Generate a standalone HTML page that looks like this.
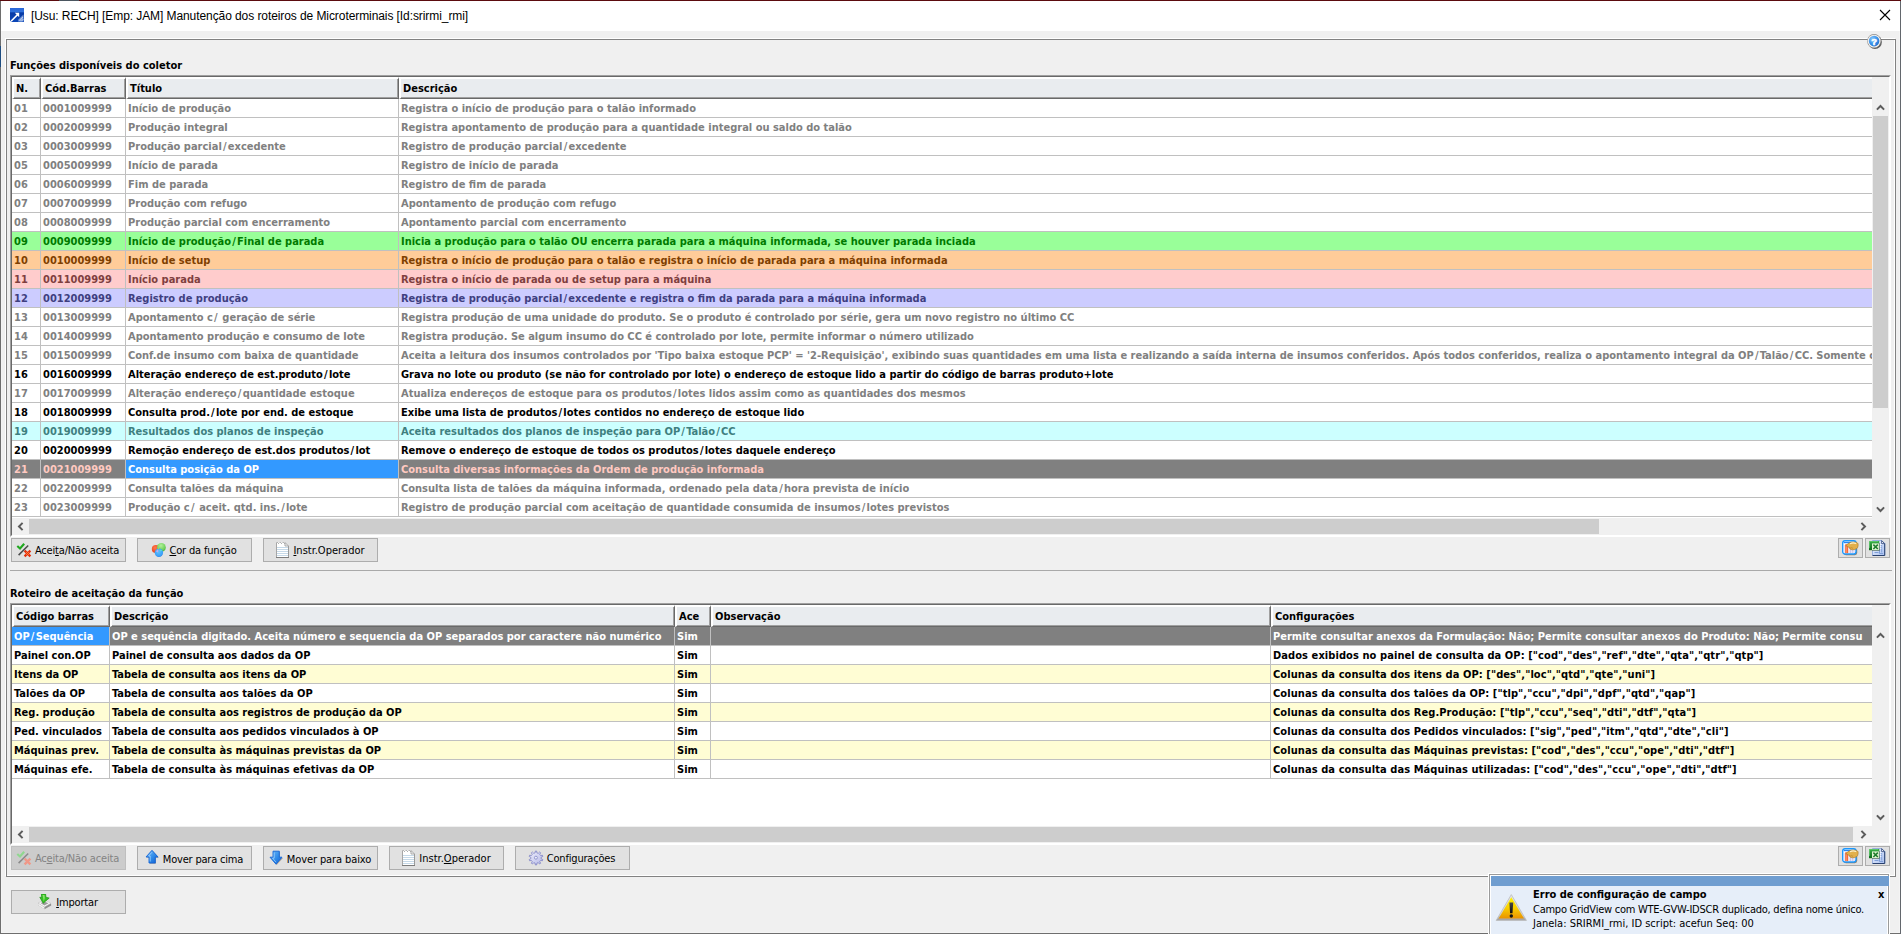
<!DOCTYPE html>
<html lang="pt-BR"><head><meta charset="utf-8"><title>Manutenção dos roteiros de Microterminais</title>
<style>
html,body{margin:0;padding:0}
body{width:1901px;height:934px;overflow:hidden;position:relative;background:#f0f0f0;color:#000;
 font:normal 11px/13px "DejaVu Sans Condensed","Liberation Sans",sans-serif;}
div,span{box-sizing:border-box}
svg{display:block}
.edgeT{position:absolute;left:0;top:0;width:1901px;height:1px;background:#5b0b0e;z-index:5}
.edgeT:after{content:"";position:absolute;left:59px;top:0;width:20px;height:1px;background:#4b5660}
.edgeL{position:absolute;left:0;top:1px;width:2px;height:933px;border-left:1px solid #6e6e6e;background:#f4f4f4;
 }
.edgeL:after{content:"";position:absolute;left:-1px;top:45px;width:1px;height:21px;background:#1d4c80}
.edgeR{position:absolute;left:1899px;top:1px;width:2px;height:933px;border-right:1px solid #63676d;background:#f4f4f4}
.edgeB{position:absolute;left:1px;top:932px;width:1899px;height:2px;background:#f4f4f4;border-bottom:1px solid #6e6e6e}
.titlebar{position:absolute;left:1px;top:1px;width:1899px;height:30px;background:#fff}
.appicon{position:absolute;left:9px;top:7px;width:14px;height:14px}
.ttl{position:absolute;left:30px;top:7px;font:normal 12px/16px "Liberation Sans",sans-serif;letter-spacing:-0.08px;white-space:nowrap}
.xclose{position:absolute;left:1878px;top:8px;width:12px;height:12px}
.gbw{position:absolute;left:5px;top:38px;width:1890px;height:838px;border:1px solid #fff}
.gbd{position:absolute;left:6px;top:39px;width:1890px;height:838px;border:1px solid #828282}
.help{position:absolute;left:1866px;top:32px;width:18px;height:18px}
.lbl{position:absolute;font-weight:bold;white-space:nowrap;line-height:13px}
.grid{position:absolute;border:1px solid;border-color:#a0a0a0 #fff #fff #a0a0a0}
.gin{position:relative;border:1px solid;border-color:#696969 #fff #fff #696969;background:#fff;overflow:hidden;box-sizing:content-box;font-weight:bold}
.hdr{position:absolute;left:0;top:0;width:1860px;height:22px;overflow:hidden;background:#e9ecef}
.hc{position:absolute;top:0;height:22px;background:#e9ecef;border-top:2px solid #fff;border-left:2px solid #fff;border-right:1px solid #696969;border-bottom:1px solid #696969;box-shadow:inset -1px -1px 0 #a0a0a0;white-space:nowrap;overflow:hidden}
.hc span{position:absolute;left:2px;top:3px;line-height:13px}
.r{position:absolute;left:0;width:1860px;height:19px;border-bottom:1px solid #c0c0c0;overflow:hidden;background:#fff}
.c{position:absolute;top:0;height:18px;line-height:20px;padding-left:2px;border-right:1px solid #c0c0c0;white-space:nowrap;overflow:hidden}
.dis{color:#808080}.blk{color:#000}
.grn{background:#99ff99;color:#007a00}
.org{background:#ffcc99;color:#7f3f00}
.pnk{background:#ffcccc;color:#7f3f3f}
.lav{background:#ccccff;color:#3f3f7f}
.cyn{background:#ccffff;color:#3f7f7f}
.sel{background:#808080;color:#ffc9c1}
.g2.sel{color:#fff}
.y{background:#fffdd4}
.c.cur{background:#3399ff;color:#fff}
.vstrip{position:absolute;right:0;top:0;width:17px;height:100%;background:#f0f0f0}
.vsb{position:absolute;right:0;width:17px;background:#f0f0f0}
.hsb{position:absolute;left:0;bottom:0;width:1860px;height:17px;background:#f0f0f0}
.ab{position:absolute;left:0;top:0;width:17px;height:17px}
.vth{position:absolute;left:1px;width:15px;background:#cdcdcd}
.hth{position:absolute;top:1px;height:15px;background:#cdcdcd}
.corner{position:absolute;right:0;bottom:0;width:17px;height:17px;background:#f0f0f0}
.btn{position:absolute;width:115px;height:24px;padding-right:2px;border:1px solid #adadad;background:#e1e1e1;display:flex;align-items:center;justify-content:center;white-space:nowrap;letter-spacing:-0.17px}
.btn .bi{width:16px;height:16px;margin-right:3px;flex:none}
.btn .bt{line-height:13px}
.btn u{text-decoration:underline;text-underline-offset:1px}
.btn.disabled{background:#cccccc;border-color:#bfbfbf;color:#838383}
.sbtn{position:absolute;width:25px;height:20px;border:1px solid #adadad;background:#e1e1e1;padding:1px 0 0 3px}
.sep{position:absolute;left:10px;top:570px;width:1882px;height:1px;background:#a9a9a9}
.pop{position:absolute;left:1488px;top:873px;width:402px;height:61px;border:1px solid #fff;border-bottom:0;z-index:6}
.popin{position:absolute;left:0;top:0;width:400px;height:60px;border:1px solid #9a9a9a;border-bottom:0;background:#e6eef9;box-shadow:inset 1px 1px 0 #fff,inset -1px 0 0 #fff}
.pophd{position:absolute;left:1px;top:1px;width:398px;height:10px;background:#6f9dd0}
.warn{position:absolute;left:5px;top:17px;width:33px;height:30px}
.pt{position:absolute;left:43px;top:13px;font-weight:bold;white-space:nowrap;line-height:13px}
.pl{position:absolute;left:43px;white-space:nowrap;letter-spacing:-0.25px;line-height:13px}
.px{position:absolute;left:388px;top:13px;font-weight:bold;line-height:13px}
.btn.lo .bt{position:relative;top:1px}
.c i{font-style:normal;margin:0 1.2px}
.c.js{letter-spacing:.08px}

</style></head>
<body>
<div class="edgeL"></div><div class="edgeR"></div><div class="edgeT"></div><div class="edgeB"></div>
<div class="titlebar"><span class="appicon"><svg width="14" height="14" viewBox="0 0 14 14"><defs><linearGradient id="ag1" x1="0" y1="0" x2="0" y2="1"><stop offset="0" stop-color="#2a66d8"/><stop offset="0.28" stop-color="#2f72dc"/><stop offset="0.34" stop-color="#083aa6"/><stop offset="1" stop-color="#0a46b8"/></linearGradient></defs><path d="M0 0h14v14h-12.5l-1.500-1.500z" fill="url(#ag1)"/><path d="M1 13.200L7.600 6.600" stroke="#fff" stroke-width="1.500"/><path d="M4.800 4.800L9.200 4.800L9.200 9.200Z" fill="#fff"/><path d="M8.500 11.500L13.500 6.500V13.600H8z" fill="#a9c0ea" opacity=".7"/><path d="M9.500 13l3.500-4M11 13.500l2.500-2.500" stroke="#e8effb" stroke-width=".8" opacity=".8"/></svg></span><span class="ttl">[Usu: RECH] [Emp: JAM] Manutenção dos roteiros de Microterminais [Id:srirmi_rmi]</span><span class="xclose"><svg width="12" height="12" viewBox="0 0 12 12"><path d="M1 1L11 11M11 1L1 11" stroke="#000" stroke-width="1.100" fill="none"/></svg></span></div>
<div class="gbw"></div><div class="gbd"></div>
<div class="help"><svg width="18" height="18" viewBox="0 0 18 18"><defs><radialGradient id="hg3" cx="0.36" cy="0.30" r="0.80"><stop offset="0" stop-color="#8ac8fb"/><stop offset="0.55" stop-color="#3a92ea"/><stop offset="1" stop-color="#1a6ccc"/></radialGradient></defs><circle cx="9" cy="10.100" r="6.900" fill="#3c3c3c" opacity=".8"/><circle cx="8.100" cy="8.900" r="6.900" fill="#8c8c8c"/><circle cx="8.100" cy="9.100" r="6.400" fill="#f6f2ee"/><circle cx="8.100" cy="9.100" r="5.300" fill="url(#hg3)"/><text x="8.100" y="12.500" text-anchor="middle" font-family="Liberation Sans,sans-serif" font-weight="bold" font-size="9.500" fill="#fff" stroke="#fff" stroke-width=".55">?</text></svg></div>
<div class="lbl" style="left:10px;top:59px">Funções disponíveis do coletor</div>
<div class="grid" style="left:10px;top:75px"><div class="gin" style="width:1877px;height:458px"><div class="vstrip"></div>
<div class="hdr">
<div class="hc" style="left:0px;width:29px"><span>N.</span></div>
<div class="hc" style="left:29px;width:85px"><span>Cód.Barras</span></div>
<div class="hc" style="left:114px;width:273px"><span>Título</span></div>
<div class="hc" style="left:387px;width:2000px"><span>Descrição</span></div>
</div>
<div class="r dis" style="top:22px">
<div class="c" style="left:0px;width:29px">01</div>
<div class="c" style="left:29px;width:85px">0001009999</div>
<div class="c" style="left:114px;width:273px">Início de produção</div>
<div class="c" style="left:387px;width:2000px">Registra o início de produção para o talão informado</div>
</div>
<div class="r dis" style="top:41px">
<div class="c" style="left:0px;width:29px">02</div>
<div class="c" style="left:29px;width:85px">0002009999</div>
<div class="c" style="left:114px;width:273px">Produção integral</div>
<div class="c" style="left:387px;width:2000px">Registra apontamento de produção para a quantidade integral ou saldo do talão</div>
</div>
<div class="r dis" style="top:60px">
<div class="c" style="left:0px;width:29px">03</div>
<div class="c" style="left:29px;width:85px">0003009999</div>
<div class="c" style="left:114px;width:273px">Produção parcial<i>/</i>excedente</div>
<div class="c" style="left:387px;width:2000px">Registro de produção parcial<i>/</i>excedente</div>
</div>
<div class="r dis" style="top:79px">
<div class="c" style="left:0px;width:29px">05</div>
<div class="c" style="left:29px;width:85px">0005009999</div>
<div class="c" style="left:114px;width:273px">Início de parada</div>
<div class="c" style="left:387px;width:2000px">Registro de início de parada</div>
</div>
<div class="r dis" style="top:98px">
<div class="c" style="left:0px;width:29px">06</div>
<div class="c" style="left:29px;width:85px">0006009999</div>
<div class="c" style="left:114px;width:273px">Fim de parada</div>
<div class="c" style="left:387px;width:2000px">Registro de fim de parada</div>
</div>
<div class="r dis" style="top:117px">
<div class="c" style="left:0px;width:29px">07</div>
<div class="c" style="left:29px;width:85px">0007009999</div>
<div class="c" style="left:114px;width:273px">Produção com refugo</div>
<div class="c" style="left:387px;width:2000px">Apontamento de produção com refugo</div>
</div>
<div class="r dis" style="top:136px">
<div class="c" style="left:0px;width:29px">08</div>
<div class="c" style="left:29px;width:85px">0008009999</div>
<div class="c" style="left:114px;width:273px">Produção parcial com encerramento</div>
<div class="c" style="left:387px;width:2000px">Apontamento parcial com encerramento</div>
</div>
<div class="r grn" style="top:155px">
<div class="c" style="left:0px;width:29px">09</div>
<div class="c" style="left:29px;width:85px">0009009999</div>
<div class="c" style="left:114px;width:273px">Início de produção<i>/</i>Final de parada</div>
<div class="c" style="left:387px;width:2000px">Inicia a produção para o talão OU encerra parada para a máquina informada, se houver parada inciada</div>
</div>
<div class="r org" style="top:174px">
<div class="c" style="left:0px;width:29px">10</div>
<div class="c" style="left:29px;width:85px">0010009999</div>
<div class="c" style="left:114px;width:273px">Início de setup</div>
<div class="c" style="left:387px;width:2000px">Registra o início de produção para o talão e registra o início de parada para a máquina informada</div>
</div>
<div class="r pnk" style="top:193px">
<div class="c" style="left:0px;width:29px">11</div>
<div class="c" style="left:29px;width:85px">0011009999</div>
<div class="c" style="left:114px;width:273px">Início parada</div>
<div class="c" style="left:387px;width:2000px">Registra o início de parada ou de setup para a máquina</div>
</div>
<div class="r lav" style="top:212px">
<div class="c" style="left:0px;width:29px">12</div>
<div class="c" style="left:29px;width:85px">0012009999</div>
<div class="c" style="left:114px;width:273px">Registro de produção</div>
<div class="c" style="left:387px;width:2000px">Registra de produção parcial<i>/</i>excedente e registra o fim da parada para a máquina informada</div>
</div>
<div class="r dis" style="top:231px">
<div class="c" style="left:0px;width:29px">13</div>
<div class="c" style="left:29px;width:85px">0013009999</div>
<div class="c" style="left:114px;width:273px">Apontamento c<i>/</i> geração de série</div>
<div class="c" style="left:387px;width:2000px">Registra produção de uma unidade do produto. Se o produto é controlado por série, gera um novo registro no último CC</div>
</div>
<div class="r dis" style="top:250px">
<div class="c" style="left:0px;width:29px">14</div>
<div class="c" style="left:29px;width:85px">0014009999</div>
<div class="c" style="left:114px;width:273px">Apontamento produção e consumo de lote</div>
<div class="c" style="left:387px;width:2000px">Registra produção. Se algum insumo do CC é controlado por lote, permite informar o número utilizado</div>
</div>
<div class="r dis" style="top:269px">
<div class="c" style="left:0px;width:29px">15</div>
<div class="c" style="left:29px;width:85px">0015009999</div>
<div class="c" style="left:114px;width:273px">Conf.de insumo com baixa de quantidade</div>
<div class="c" style="left:387px;width:2000px">Aceita a leitura dos insumos controlados por 'Tipo baixa estoque PCP' = '2-Requisição', exibindo suas quantidades em uma lista e realizando a saída interna de insumos conferidos. Após todos conferidos, realiza o apontamento integral da OP<i>/</i>Talão<i>/</i>CC. Somente com todos os insumos conferidos</div>
</div>
<div class="r blk" style="top:288px">
<div class="c" style="left:0px;width:29px">16</div>
<div class="c" style="left:29px;width:85px">0016009999</div>
<div class="c" style="left:114px;width:273px">Alteração endereço de est.produto<i>/</i>lote</div>
<div class="c" style="left:387px;width:2000px">Grava no lote ou produto (se não for controlado por lote) o endereço de estoque lido a partir do código de barras produto+lote</div>
</div>
<div class="r dis" style="top:307px">
<div class="c" style="left:0px;width:29px">17</div>
<div class="c" style="left:29px;width:85px">0017009999</div>
<div class="c" style="left:114px;width:273px">Alteração endereço<i>/</i>quantidade estoque</div>
<div class="c" style="left:387px;width:2000px">Atualiza endereços de estoque para os produtos<i>/</i>lotes lidos assim como as quantidades dos mesmos</div>
</div>
<div class="r blk" style="top:326px">
<div class="c" style="left:0px;width:29px">18</div>
<div class="c" style="left:29px;width:85px">0018009999</div>
<div class="c" style="left:114px;width:273px">Consulta prod.<i>/</i>lote por end. de estoque</div>
<div class="c" style="left:387px;width:2000px">Exibe uma lista de produtos<i>/</i>lotes contidos no endereço de estoque lido</div>
</div>
<div class="r cyn" style="top:345px">
<div class="c" style="left:0px;width:29px">19</div>
<div class="c" style="left:29px;width:85px">0019009999</div>
<div class="c" style="left:114px;width:273px">Resultados dos planos de inspeção</div>
<div class="c" style="left:387px;width:2000px">Aceita resultados dos planos de inspeção para OP<i>/</i>Talão<i>/</i>CC</div>
</div>
<div class="r blk" style="top:364px">
<div class="c" style="left:0px;width:29px">20</div>
<div class="c" style="left:29px;width:85px">0020009999</div>
<div class="c" style="left:114px;width:273px">Remoção endereço de est.dos produtos<i>/</i>lot</div>
<div class="c" style="left:387px;width:2000px">Remove o endereço de estoque de todos os produtos<i>/</i>lotes daquele endereço</div>
</div>
<div class="r sel" style="top:383px">
<div class="c" style="left:0px;width:29px">21</div>
<div class="c" style="left:29px;width:85px">0021009999</div>
<div class="c cur" style="left:114px;width:273px">Consulta posição da OP</div>
<div class="c" style="left:387px;width:2000px">Consulta diversas informações da Ordem de produção informada</div>
</div>
<div class="r dis" style="top:402px">
<div class="c" style="left:0px;width:29px">22</div>
<div class="c" style="left:29px;width:85px">0022009999</div>
<div class="c" style="left:114px;width:273px">Consulta talões da máquina</div>
<div class="c" style="left:387px;width:2000px">Consulta lista de talões da máquina informada, ordenado pela data<i>/</i>hora prevista de início</div>
</div>
<div class="r dis" style="top:421px">
<div class="c" style="left:0px;width:29px">23</div>
<div class="c" style="left:29px;width:85px">0023009999</div>
<div class="c" style="left:114px;width:273px">Produção c<i>/</i> aceit. qtd. ins.<i>/</i>lote</div>
<div class="c" style="left:387px;width:2000px">Registro de produção parcial com aceitação de quantidade consumida de insumos<i>/</i>lotes previstos</div>
</div>
<div class="vsb" style="top:22px;height:419px"><div class="ab"><svg width="17" height="17" viewBox="0 0 17 17"><path d="M4.900 10.600L8.500 7L12.100 10.600" stroke="#5c5c5c" stroke-width="2" fill="none"/></svg></div><div class="vth" style="top:17px;height:292px"></div><div class="ab" style="top:auto;bottom:0"><svg width="17" height="17" viewBox="0 0 17 17"><path d="M4.900 6.400L8.500 10L12.100 6.400" stroke="#5c5c5c" stroke-width="2" fill="none"/></svg></div></div>
<div class="hsb"><div class="ab"><svg width="17" height="17" viewBox="0 0 17 17"><path d="M10.600 4.900L7 8.500L10.600 12.100" stroke="#5c5c5c" stroke-width="2" fill="none"/></svg></div><div class="hth" style="left:17px;width:1570px"></div><div class="ab" style="left:auto;right:0"><svg width="17" height="17" viewBox="0 0 17 17"><path d="M6.400 4.900L10 8.500L6.400 12.100" stroke="#5c5c5c" stroke-width="2" fill="none"/></svg></div></div>
<div class="corner"></div>
</div></div>
<div class="btn " style="left:11px;top:538px"><span class="bi"><svg width="16" height="16" viewBox="0 0 16 16"><path d="M1.300 4L4 6.500L8.200 1.700" stroke="#1fa81f" stroke-width="2.100" fill="none"/><path d="M2.600 13.100L12.200 3.500" stroke="#4c4c4c" stroke-width="1.500"/><path d="M8.600 8.600L14.400 14.400M14.400 8.600L8.600 14.400" stroke="#e2300c" stroke-width="2.300"/><path d="M10 10L13 13M13 10L10 13" stroke="#ff7838" stroke-width="1"/></svg></span><span class="bt" style="letter-spacing:-0.17px">Acei<u>t</u>a/Não aceita</span></div>
<div class="btn " style="left:137px;top:538px"><span class="bi"><svg width="16" height="16" viewBox="0 0 16 16"><defs><radialGradient id="cr9" cx=".4" cy=".35" r=".7"><stop offset="0" stop-color="#ff7a50"/><stop offset="1" stop-color="#e63a14"/></radialGradient><radialGradient id="cg9" cx=".45" cy=".3" r=".75"><stop offset="0" stop-color="#b2f09a"/><stop offset=".7" stop-color="#6ccf58"/><stop offset="1" stop-color="#3aa62c"/></radialGradient><radialGradient id="cb9" cx=".45" cy=".4" r=".7"><stop offset="0" stop-color="#5cc0ff"/><stop offset=".7" stop-color="#3aa0f8"/><stop offset="1" stop-color="#1668d8"/></radialGradient></defs><g transform="translate(.8 0)"><circle cx="5.100" cy="7" r="4.100" fill="url(#cr9)"/><circle cx="10.600" cy="5.400" r="4.400" fill="url(#cg9)"/><circle cx="8.100" cy="10.800" r="4.200" fill="url(#cb9)"/><path d="M6.300 7.500l1.500 1.200-1.200 1.800-1.300-.8z" fill="#cfaeea" opacity=".9"/><path d="M9 7.600c1 .2 2 .6 2.700 1.200-1 .6-2 .6-3 .2z" fill="#5fe0d8" opacity=".85"/><path d="M7.300 4.500l.7 2.600-.8.400z" fill="#f2c21c"/></g></svg></span><span class="bt" style="letter-spacing:-0.17px"><u>C</u>or da função</span></div>
<div class="btn " style="left:263px;top:538px"><span class="bi"><svg width="16" height="16" viewBox="0 0 16 16"><path d="M2.500 .5h8.500l3.500 3.500v11.500h-12z" fill="#fff"/><path d="M3 5.500h11M3 7.500h11M3 9.500h11M3 11.500h11M3 13.500h11" stroke="#c6d9e8" stroke-width="1"/><path d="M2.500 .5v15" stroke="#a6a6a6"/><path d="M14.500 4v11.500" stroke="#9a9a9a"/><path d="M2 15.500h13" stroke="#7c7c7c"/><path d="M2.500 .5h8.500" stroke="#b4b4b4" stroke-dasharray="1.500 1.500"/><path d="M4 1.500h1M7 1.500h1M10 1.500h1" stroke="#b0b0b0"/><path d="M11 .5v3.500h3.500z" fill="#f4f4f4" stroke="#a2a2a2" stroke-width=".9"/></svg></span><span class="bt" style="letter-spacing:0.00px"><u>I</u>nstr.Operador</span></div>
<div class="sbtn" style="left:1838px;top:538px"><svg width="17" height="17" viewBox="0 0 17 17"><rect x="1.600" y="1.600" width="13.600" height="13.600" rx="2.400" fill="#7a5a38" opacity=".75"/><rect x=".700" y=".700" width="13.300" height="13.300" rx="2.200" fill="#fff" stroke="#1a98ff" stroke-width="1.400"/><rect x="1.800" y="1.900" width="11" height="1.300" fill="#2c86f0"/><rect x="3.200" y="4.300" width="3" height="8.800" fill="#f4602c"/><path d="M6.500 6h6.500M1.800 6h1.200M6.500 8h6.500M1.800 8h1.200M6.500 10h6.500M1.800 10h1.200M6.500 12h6.500M1.800 12h1.200M8.500 4.500v8.500M10.700 4.500v8.500" stroke="#c2bcea" stroke-width=".8"/><path d="M4.200 6h1M4.200 8h1M4.200 10h1M4.200 12h1" stroke="#ffd8c0" stroke-width=".9"/><path d="M3.800 5.700C5 4.600 6.200 3.400 7.400 2.800 8.600 2.100 10 1.900 11.500 2c1.500 0 3 .3 4 1 .7.600.7 1.600.6 2.600-.1 1.200-.4 2.200-1.300 2.900-1.200.9-2.800 1.300-4.300 1.300-1.200 0-2.300-.4-2.900-1.300-.4-.5-.5-1.100-.9-1.500-.5-.5-1.800-.5-2.900-1.300z" fill="#e2b04c" stroke="#a87620" stroke-width=".6"/><path d="M8 3.700c1.800-1 4.300-1 6.200-.2" stroke="#fff4d0" stroke-width="1.300" fill="none" opacity=".95"/><path d="M7.300 7.200l1 .9.900-.6.900.8 1-.5" stroke="#b07c22" stroke-width=".6" fill="none"/></svg></div><div class="sbtn" style="left:1865px;top:538px"><svg width="17" height="17" viewBox="0 0 17 17"><defs><linearGradient id="xd12" x1="0" y1="0" x2="1" y2="1"><stop offset="0" stop-color="#f6f9ff"/><stop offset="1" stop-color="#a6bef0"/></linearGradient><linearGradient id="xg12" x1="0" y1="0" x2="0" y2="1"><stop offset="0" stop-color="#3cb44a"/><stop offset="1" stop-color="#0c681a"/></linearGradient></defs><path d="M3.500 .500h9.300l3 3v12h-12.300z" fill="url(#xd12)" stroke="#90a8dc" stroke-width=".9"/><path d="M15.700 3.600v11.900H3.600" stroke="#28406e" stroke-width="1" fill="none"/><path d="M12.600 .700l3 2.900h-3z" fill="#fff" stroke="#2c447a" stroke-width=".8"/><path d="M5.500 12.500h4M10.500 9.500v4h3.500M12.700 5v7.500" stroke="#7f9fd8" stroke-width="1" fill="none"/><path d="M11.300 4.500h1M11.300 6.500h1M11.300 8.500h1" stroke="#fff" stroke-width="1"/><rect x="0" y="1" width="10.300" height="9.200" fill="url(#xg12)"/><path d="M0 1h9v.8H.800V8H0z" fill="#78d684" opacity=".7"/><rect x="3" y="3.400" width="7" height="6.800" fill="#dff4d2"/><path d="M10.400 3v7.500H3" stroke="#56665a" stroke-width=".8" fill="none" opacity=".75"/><path d="M4.400 4.600L8.800 9M8.800 4.600L4.400 9" stroke="#1f7c2c" stroke-width="1.500"/></svg></div>
<div class="sep"></div>
<div class="lbl" style="left:10px;top:587px">Roteiro de aceitação da função</div>
<div class="grid" style="left:10px;top:603px"><div class="gin" style="width:1877px;height:238px"><div class="vstrip"></div>
<div class="hdr">
<div class="hc" style="left:0px;width:98px"><span>Código barras</span></div>
<div class="hc" style="left:98px;width:565px"><span>Descrição</span></div>
<div class="hc" style="left:663px;width:36px"><span>Ace</span></div>
<div class="hc" style="left:699px;width:560px"><span>Observação</span></div>
<div class="hc" style="left:1259px;width:2000px"><span>Configurações</span></div>
</div>
<div class="r g2 sel" style="top:22px">
<div class="c cur" style="left:0px;width:98px">OP<i>/</i>Sequência</div>
<div class="c" style="left:98px;width:565px">OP e sequência digitado. Aceita número e sequencia da OP separados por caractere não numérico</div>
<div class="c" style="left:663px;width:36px">Sim</div>
<div class="c" style="left:699px;width:560px"></div>
<div class="c" style="left:1259px;width:2000px">Permite consultar anexos da Formulação: Não; Permite consultar anexos do Produto: Não; Permite consu</div>
</div>
<div class="r g2 w" style="top:41px">
<div class="c" style="left:0px;width:98px">Painel con.OP</div>
<div class="c" style="left:98px;width:565px">Painel de consulta aos dados da OP</div>
<div class="c" style="left:663px;width:36px">Sim</div>
<div class="c" style="left:699px;width:560px"></div>
<div class="c js" style="left:1259px;width:2000px">Dados exibidos no painel de consulta da OP: ["cod","des","ref","dte","qta","qtr","qtp"]</div>
</div>
<div class="r g2 y" style="top:60px">
<div class="c" style="left:0px;width:98px">Itens da OP</div>
<div class="c" style="left:98px;width:565px">Tabela de consulta aos itens da OP</div>
<div class="c" style="left:663px;width:36px">Sim</div>
<div class="c" style="left:699px;width:560px"></div>
<div class="c js" style="left:1259px;width:2000px">Colunas da consulta dos itens da OP: ["des","loc","qtd","qte","uni"]</div>
</div>
<div class="r g2 w" style="top:79px">
<div class="c" style="left:0px;width:98px">Talões da OP</div>
<div class="c" style="left:98px;width:565px">Tabela de consulta aos talões da OP</div>
<div class="c" style="left:663px;width:36px">Sim</div>
<div class="c" style="left:699px;width:560px"></div>
<div class="c js" style="left:1259px;width:2000px">Colunas da consulta dos talões da OP: ["tlp","ccu","dpi","dpf","qtd","qap"]</div>
</div>
<div class="r g2 y" style="top:98px">
<div class="c" style="left:0px;width:98px">Reg. produção</div>
<div class="c" style="left:98px;width:565px">Tabela de consulta aos registros de produção da OP</div>
<div class="c" style="left:663px;width:36px">Sim</div>
<div class="c" style="left:699px;width:560px"></div>
<div class="c js" style="left:1259px;width:2000px">Colunas da consulta dos Reg.Produção: ["tlp","ccu","seq","dti","dtf","qta"]</div>
</div>
<div class="r g2 w" style="top:117px">
<div class="c" style="left:0px;width:98px">Ped. vinculados</div>
<div class="c" style="left:98px;width:565px">Tabela de consulta aos pedidos vinculados à OP</div>
<div class="c" style="left:663px;width:36px">Sim</div>
<div class="c" style="left:699px;width:560px"></div>
<div class="c js" style="left:1259px;width:2000px">Colunas da consulta dos Pedidos vinculados: ["sig","ped","itm","qtd","dte","cli"]</div>
</div>
<div class="r g2 y" style="top:136px">
<div class="c" style="left:0px;width:98px">Máquinas prev.</div>
<div class="c" style="left:98px;width:565px">Tabela de consulta às máquinas previstas da OP</div>
<div class="c" style="left:663px;width:36px">Sim</div>
<div class="c" style="left:699px;width:560px"></div>
<div class="c js" style="left:1259px;width:2000px">Colunas da consulta das Máquinas previstas: ["cod","des","ccu","ope","dti","dtf"]</div>
</div>
<div class="r g2 w" style="top:155px">
<div class="c" style="left:0px;width:98px">Máquinas efe.</div>
<div class="c" style="left:98px;width:565px">Tabela de consulta às máquinas efetivas da OP</div>
<div class="c" style="left:663px;width:36px">Sim</div>
<div class="c" style="left:699px;width:560px"></div>
<div class="c js" style="left:1259px;width:2000px">Colunas da consulta das Máquinas utilizadas: ["cod","des","ccu","ope","dti","dtf"]</div>
</div>
<div class="vsb" style="top:22px;height:199px"><div class="ab"><svg width="17" height="17" viewBox="0 0 17 17"><path d="M4.900 10.600L8.500 7L12.100 10.600" stroke="#5c5c5c" stroke-width="2" fill="none"/></svg></div><div class="ab" style="top:auto;bottom:0"><svg width="17" height="17" viewBox="0 0 17 17"><path d="M4.900 6.400L8.500 10L12.100 6.400" stroke="#5c5c5c" stroke-width="2" fill="none"/></svg></div></div>
<div class="hsb"><div class="ab"><svg width="17" height="17" viewBox="0 0 17 17"><path d="M10.600 4.900L7 8.500L10.600 12.100" stroke="#5c5c5c" stroke-width="2" fill="none"/></svg></div><div class="hth" style="left:17px;width:1824px"></div><div class="ab" style="left:auto;right:0"><svg width="17" height="17" viewBox="0 0 17 17"><path d="M6.400 4.900L10 8.500L6.400 12.100" stroke="#5c5c5c" stroke-width="2" fill="none"/></svg></div></div>
<div class="corner"></div>
</div></div>
<div class="btn disabled" style="left:11px;top:846px"><span class="bi"><svg width="16" height="16" viewBox="0 0 16 16"><path d="M1.300 4L4 6.500L8.200 1.700" stroke="#8fd88f" stroke-width="2.100" fill="none"/><path d="M2.600 13.100L12.200 3.500" stroke="#8a8a8a" stroke-width="1.500"/><path d="M8.600 8.600L14.400 14.400M14.400 8.600L8.600 14.400" stroke="#f09888" stroke-width="2.300"/></svg></span><span class="bt" style="letter-spacing:-0.17px">Ac<u>e</u>ita/Não aceita</span></div>
<div class="btn lo" style="left:137px;top:846px"><span class="bi"><svg width="16" height="16" viewBox="0 0 16 16"><defs><linearGradient id="aug18" x1="0" y1="0" x2="1" y2="1"><stop offset="0" stop-color="#7cc2fa"/><stop offset=".55" stop-color="#2f8ae8"/><stop offset="1" stop-color="#0f5cd0"/></linearGradient></defs><path d="M8.600 .9L15 7.700H12V13.800H6V7.700H3Z" fill="#6a5a48" opacity=".45"/><path d="M8 .3L14 7H11.300V13H5V7H2Z" fill="url(#aug18)" stroke="#1464d6" stroke-width=".9" stroke-linejoin="round"/><path d="M8 2.200L4.600 6H6.200V11.500" stroke="#a8d8ff" stroke-width=".9" fill="none" opacity=".8"/></svg></span><span class="bt" style="letter-spacing:-0.20px">Mover para cima</span></div>
<div class="btn lo" style="left:263px;top:846px"><span class="bi"><svg width="16" height="16" viewBox="0 0 16 16"><defs><linearGradient id="adg19" x1="0" y1="0" x2="1" y2="1"><stop offset="0" stop-color="#6ab8f8"/><stop offset=".55" stop-color="#2f8ae8"/><stop offset="1" stop-color="#0f5cd0"/></linearGradient></defs><path d="M8.700 14.900L15 8H12V1.800H6V8H3Z" fill="#6a5a48" opacity=".45"/><path d="M8 14.200L14 7.200H11.300V1.200H5V7.200H2Z" fill="url(#adg19)" stroke="#1464d6" stroke-width=".9" stroke-linejoin="round"/><path d="M6.200 2.500V8.200H4.600L8 12.200" stroke="#a8d8ff" stroke-width=".9" fill="none" opacity=".8"/></svg></span><span class="bt" style="letter-spacing:-0.10px">Mover para baixo</span></div>
<div class="btn " style="left:389px;top:846px"><span class="bi"><svg width="16" height="16" viewBox="0 0 16 16"><path d="M2.500 .5h8.500l3.500 3.500v11.500h-12z" fill="#fff"/><path d="M3 5.500h11M3 7.500h11M3 9.500h11M3 11.500h11M3 13.500h11" stroke="#c6d9e8" stroke-width="1"/><path d="M2.500 .5v15" stroke="#a6a6a6"/><path d="M14.500 4v11.500" stroke="#9a9a9a"/><path d="M2 15.500h13" stroke="#7c7c7c"/><path d="M2.500 .5h8.500" stroke="#b4b4b4" stroke-dasharray="1.500 1.500"/><path d="M4 1.500h1M7 1.500h1M10 1.500h1" stroke="#b0b0b0"/><path d="M11 .5v3.500h3.500z" fill="#f4f4f4" stroke="#a2a2a2" stroke-width=".9"/></svg></span><span class="bt" style="letter-spacing:0.03px">Instr.<u>O</u>perador</span></div>
<div class="btn " style="left:515px;top:846px"><span class="bi"><svg width="16" height="16" viewBox="0 0 16 16"><defs><linearGradient id="gg21" x1="0" y1="0" x2="1" y2="1"><stop offset="0" stop-color="#f0f0fc"/><stop offset=".5" stop-color="#d2d4f2"/><stop offset="1" stop-color="#b4b7e6"/></linearGradient></defs><path d="M7.090 2.880 L7.390 1.030 L8.610 1.030 L8.910 2.880 L10.270 3.320 L11.600 2 L12.600 2.720 L11.750 4.390 L12.590 5.550 L14.440 5.260 L14.820 6.430 L13.150 7.280 L13.150 8.720 L14.820 9.570 L14.440 10.740 L12.590 10.450 L11.750 11.610 L12.600 13.280 L11.600 14 L10.270 12.680 L8.910 13.120 L8.610 14.970 L7.390 14.970 L7.090 13.120 L5.730 12.680 L4.400 14 L3.400 13.280 L4.250 11.610 L3.410 10.450 L1.560 10.740 L1.180 9.570 L2.850 8.720 L2.850 7.280 L1.180 6.430 L1.560 5.260 L3.410 5.550 L4.250 4.390 L3.400 2.720 L4.400 2 L5.730 3.320Z" fill="url(#gg21)" stroke="#7e82c4" stroke-width=".8" stroke-linejoin="round"/><circle cx="7.900" cy="7.700" r="1.500" fill="#eef0f8" stroke="#8a8ecb" stroke-width=".9"/></svg></span><span class="bt" style="letter-spacing:-0.19px">Confi<u>g</u>urações</span></div>
<div class="sbtn" style="left:1838px;top:846px"><svg width="17" height="17" viewBox="0 0 17 17"><rect x="1.600" y="1.600" width="13.600" height="13.600" rx="2.400" fill="#7a5a38" opacity=".75"/><rect x=".700" y=".700" width="13.300" height="13.300" rx="2.200" fill="#fff" stroke="#1a98ff" stroke-width="1.400"/><rect x="1.800" y="1.900" width="11" height="1.300" fill="#2c86f0"/><rect x="3.200" y="4.300" width="3" height="8.800" fill="#f4602c"/><path d="M6.500 6h6.500M1.800 6h1.200M6.500 8h6.500M1.800 8h1.200M6.500 10h6.500M1.800 10h1.200M6.500 12h6.500M1.800 12h1.200M8.500 4.500v8.500M10.700 4.500v8.500" stroke="#c2bcea" stroke-width=".8"/><path d="M4.200 6h1M4.200 8h1M4.200 10h1M4.200 12h1" stroke="#ffd8c0" stroke-width=".9"/><path d="M3.800 5.700C5 4.600 6.200 3.400 7.400 2.800 8.600 2.100 10 1.900 11.500 2c1.500 0 3 .3 4 1 .7.600.7 1.600.6 2.600-.1 1.200-.4 2.200-1.300 2.900-1.200.9-2.800 1.300-4.300 1.300-1.200 0-2.300-.4-2.900-1.300-.4-.5-.5-1.100-.9-1.500-.5-.5-1.800-.5-2.900-1.300z" fill="#e2b04c" stroke="#a87620" stroke-width=".6"/><path d="M8 3.700c1.800-1 4.300-1 6.200-.2" stroke="#fff4d0" stroke-width="1.300" fill="none" opacity=".95"/><path d="M7.300 7.200l1 .9.900-.6.900.8 1-.5" stroke="#b07c22" stroke-width=".6" fill="none"/></svg></div><div class="sbtn" style="left:1865px;top:846px"><svg width="17" height="17" viewBox="0 0 17 17"><defs><linearGradient id="xd23" x1="0" y1="0" x2="1" y2="1"><stop offset="0" stop-color="#f6f9ff"/><stop offset="1" stop-color="#a6bef0"/></linearGradient><linearGradient id="xg23" x1="0" y1="0" x2="0" y2="1"><stop offset="0" stop-color="#3cb44a"/><stop offset="1" stop-color="#0c681a"/></linearGradient></defs><path d="M3.500 .500h9.300l3 3v12h-12.300z" fill="url(#xd23)" stroke="#90a8dc" stroke-width=".9"/><path d="M15.700 3.600v11.900H3.600" stroke="#28406e" stroke-width="1" fill="none"/><path d="M12.600 .700l3 2.900h-3z" fill="#fff" stroke="#2c447a" stroke-width=".8"/><path d="M5.500 12.500h4M10.500 9.500v4h3.500M12.700 5v7.500" stroke="#7f9fd8" stroke-width="1" fill="none"/><path d="M11.300 4.500h1M11.300 6.500h1M11.300 8.500h1" stroke="#fff" stroke-width="1"/><rect x="0" y="1" width="10.300" height="9.200" fill="url(#xg23)"/><path d="M0 1h9v.8H.800V8H0z" fill="#78d684" opacity=".7"/><rect x="3" y="3.400" width="7" height="6.800" fill="#dff4d2"/><path d="M10.400 3v7.500H3" stroke="#56665a" stroke-width=".8" fill="none" opacity=".75"/><path d="M4.400 4.600L8.800 9M8.800 4.600L4.400 9" stroke="#1f7c2c" stroke-width="1.500"/></svg></div>
<div class="btn " style="left:11px;top:890px"><span class="bi"><svg width="16" height="16" viewBox="0 0 16 16"><path d="M1 9L1.300 11.200L7.500 15.200L14.200 11.500L14 9.200Z" fill="#8e8e8e"/><path d="M1 9L7.300 13L7.500 15.200L1.300 11.200Z" fill="#f2f2f2"/><path d="M1 9L7.400 6.300L14 9.200L7.300 13Z" fill="#fbfbfb" stroke="#bdbdbd" stroke-width=".5"/><path d="M3.500 9L7.400 7.400L11.500 9.200L7.300 11.500Z" fill="#9c9c9c"/><path d="M4.400 0h4.200l.3 3.200 3.300 .9L6.200 9.200 2.800 3.200l1.900.3z" fill="#35c024" stroke="#1d9412" stroke-width=".7" stroke-linejoin="round"/><path d="M5.500 1h2l.3 3-1 3.500z" fill="#9cf07c" opacity=".8"/></svg></span><span class="bt" style="letter-spacing:-0.17px"><u>I</u>mportar</span></div>
<div class="pop"><div class="popin"><div class="pophd"></div><div class="warn"><svg width="33" height="30" viewBox="0 0 33 30"><defs><linearGradient id="wg25" x1="0" y1="0" x2="0" y2="1"><stop offset="0" stop-color="#fff600"/><stop offset="0.5" stop-color="#f9cf00"/><stop offset="1" stop-color="#e99200"/></linearGradient><linearGradient id="wb25" x1="0" y1="0" x2="0" y2="1"><stop offset="0" stop-color="#e6e6e6"/><stop offset="0.8" stop-color="#cfcfcf"/><stop offset="1" stop-color="#9c9c9c"/></linearGradient><linearGradient id="wx25" x1="0" y1="0" x2="0" y2="1"><stop offset="0" stop-color="#4a4a4a"/><stop offset="1" stop-color="#0c0c0c"/></linearGradient></defs><path d="M16.300 2.600L31.400 28.400H1.200Z" fill="url(#wb25)" stroke="#bcbcbc" stroke-width=".8" stroke-linejoin="round"/><path d="M16.300 5.200L29 26.600H3.600Z" fill="url(#wg25)"/><path d="M14.400 10.400h3.800l-.7 10.800h-2.400z" fill="url(#wx25)"/><circle cx="16.300" cy="24" r="1.700" fill="#141414"/></svg></div><div class="pt">Erro de configuração de campo</div><div class="pl" style="top:28px">Campo GridView com WTE-GVW-IDSCR duplicado, defina nome único.</div><div class="pl" style="top:42px;letter-spacing:0px">Janela: SRIRMI_rmi, ID script: acefun Seq: 00</div><div class="px">x</div></div></div>
</body></html>
